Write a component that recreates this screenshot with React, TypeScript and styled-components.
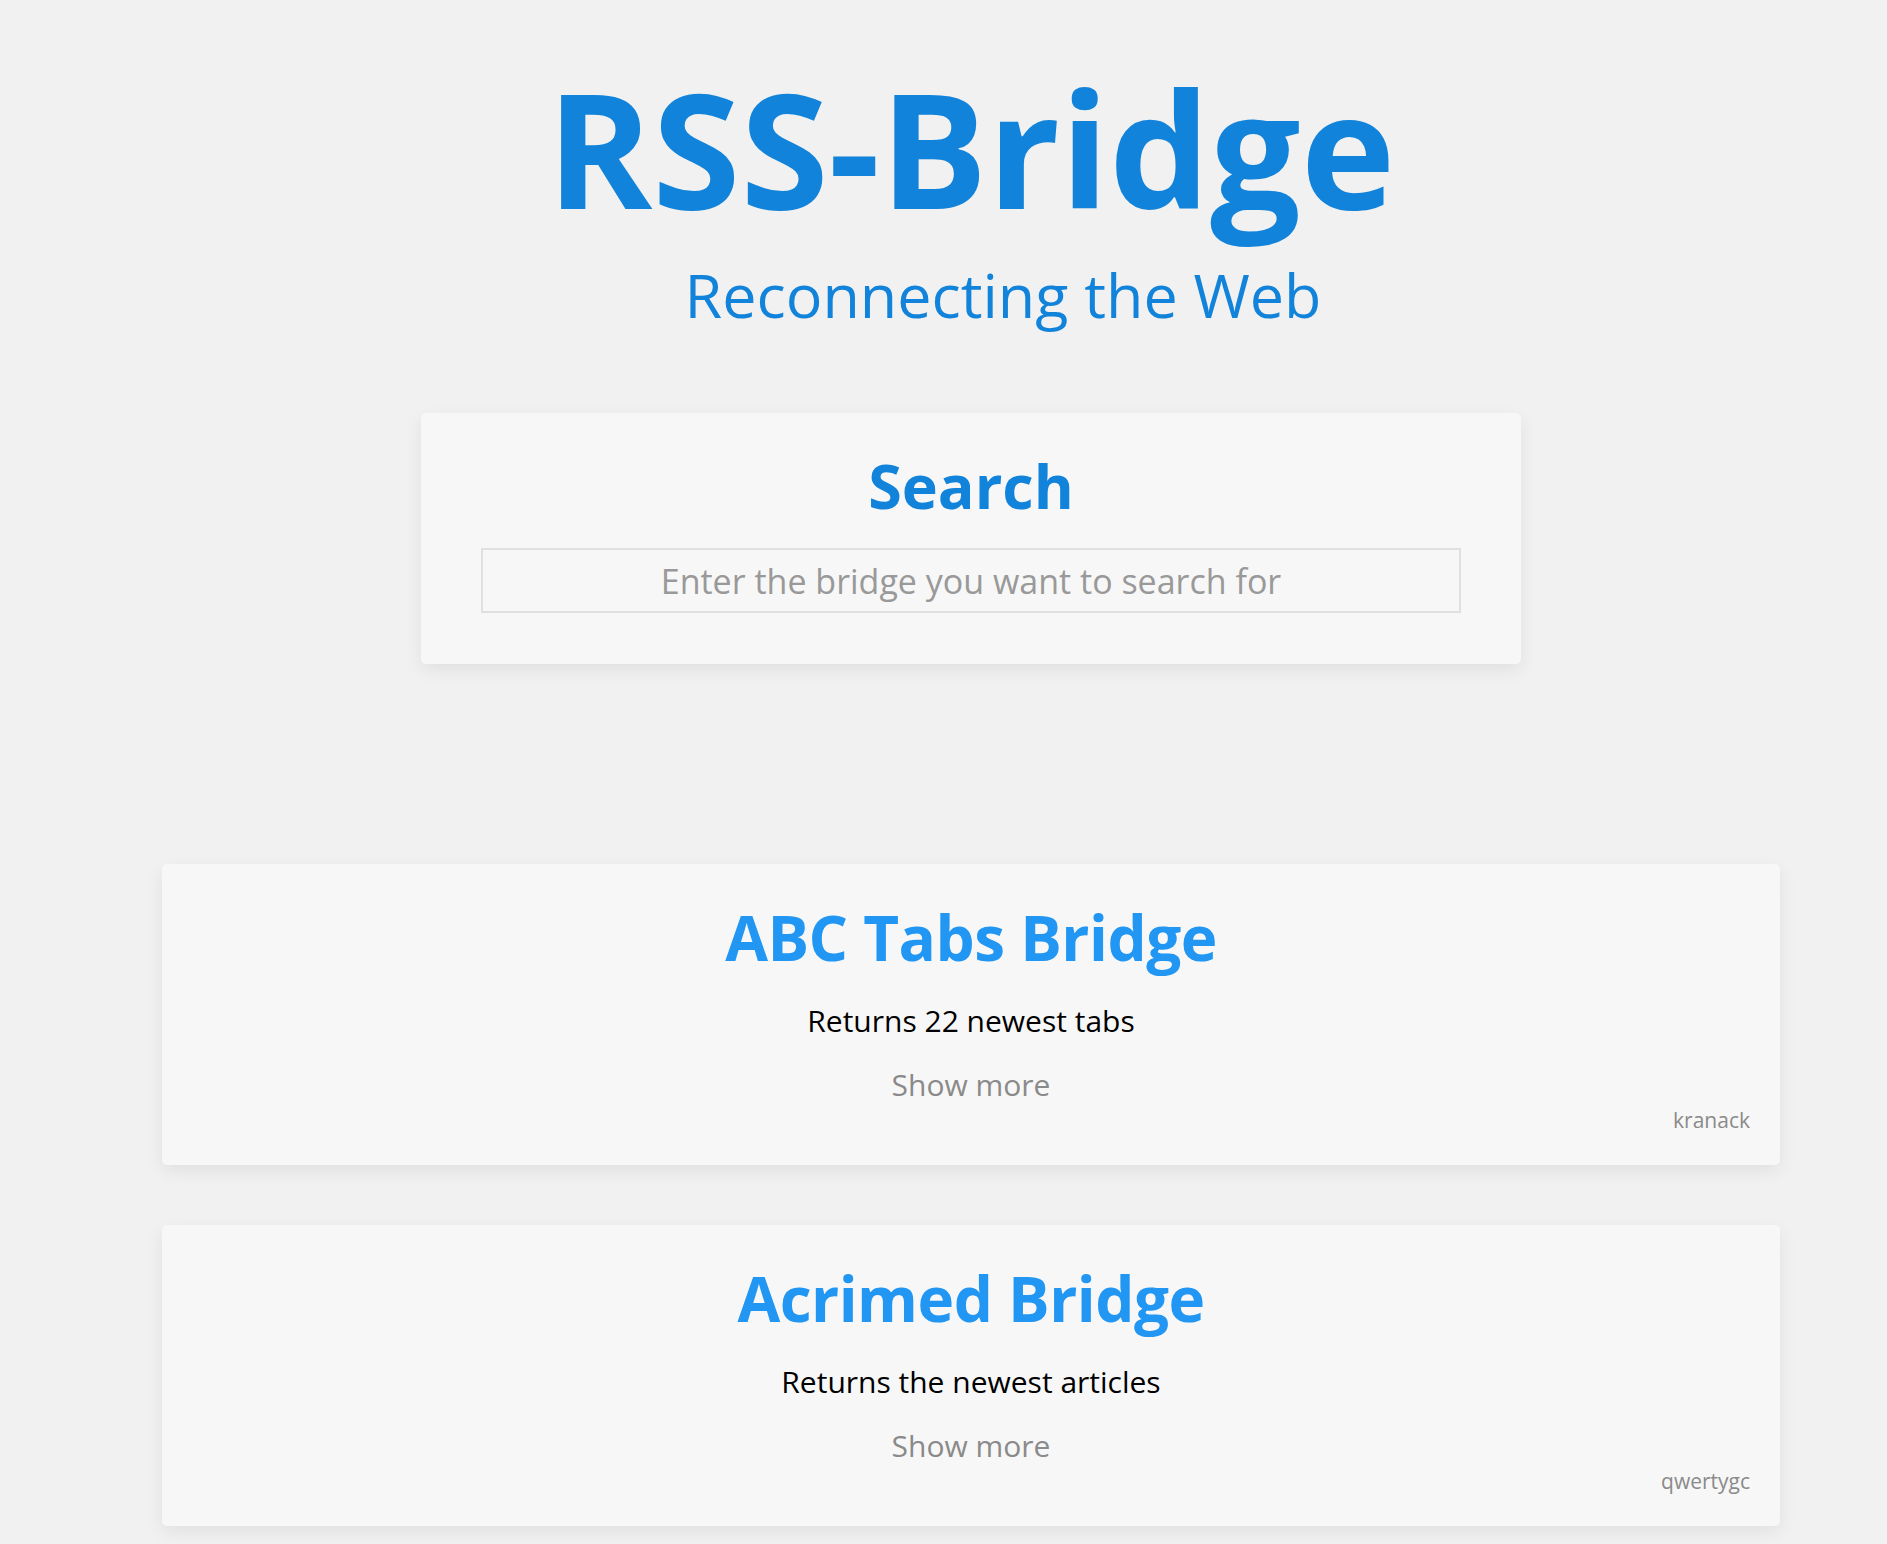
import React from 'react';
import styled, { createGlobalStyle } from 'styled-components';

const GlobalStyle = createGlobalStyle`
  html, body {
    margin: 0;
    padding: 0;
    background: #f1f1f1;
    font-family: 'Open Sans', 'Noto Sans', Arial, sans-serif;
  }
`;

const Page = styled.div`
  padding: 0 107px 40px 162px;
  display: flex;
  flex-direction: column;
  align-items: stretch;
`;

const Header = styled.header`
  display: flex;
  flex-direction: column;
  align-items: center;
  padding-top: 67px;
`;

const Title = styled.h1`
  margin: 0;
  font-size: 160px;
  line-height: 1;
  font-weight: 700;
  color: #1283da;
`;

const Subtitle = styled.h2`
  margin: 37px 0 0;
  padding-left: 64px;
  font-size: 61px;
  line-height: 1;
  font-weight: 400;
  color: #1283da;
`;

const SearchCard = styled.section`
  align-self: center;
  box-sizing: border-box;
  width: 1100px;
  margin-top: 88px;
  padding: 42px 60px 51px;
  background: #f7f7f7;
  border-radius: 5px;
  box-shadow: 0 6px 18px rgba(0, 0, 0, 0.07);
  display: flex;
  flex-direction: column;
  align-items: center;
`;

const SearchHeading = styled.h2`
  margin: 0;
  font-size: 61px;
  line-height: 1;
  font-weight: 700;
  color: #1283da;
`;

const SearchInput = styled.input`
  box-sizing: border-box;
  width: 100%;
  height: 65px;
  margin-top: 32px;
  border: 2px solid #e0e0e0;
  background: #f7f7f7;
  font-family: inherit;
  font-size: 34px;
  text-align: center;
  color: #333;
  outline: none;

  &::placeholder {
    color: #999;
  }
`;

const BridgeList = styled.div`
  margin-top: 200px;
  display: flex;
  flex-direction: column;
  gap: 60px;
`;

const BridgeCard = styled.section`
  box-sizing: border-box;
  height: 301px;
  padding: 42px 30px 0;
  background: #f7f7f7;
  border-radius: 5px;
  box-shadow: 0 6px 18px rgba(0, 0, 0, 0.07);
  display: flex;
  flex-direction: column;
  align-items: center;
`;

const BridgeTitle = styled.h2`
  margin: 0;
  font-size: 62px;
  line-height: 1;
  font-weight: 700;
  letter-spacing: -0.5px;
  color: #2196f3;
`;

const Description = styled.p`
  margin: 38px 0 0;
  font-size: 30px;
  line-height: 1;
  color: #000;
`;

const ShowMore = styled.span`
  margin-top: 34px;
  font-size: 30px;
  line-height: 1;
  color: #8a8a8a;
  cursor: pointer;
`;

const Maintainer = styled.span`
  align-self: flex-end;
  margin-top: 10px;
  font-size: 21px;
  line-height: 1;
  color: #8a8a8a;
`;

interface Bridge {
  name: string;
  description: string;
  maintainer: string;
}

const bridges: Bridge[] = [
  { name: 'ABC Tabs Bridge', description: 'Returns 22 newest tabs', maintainer: 'kranack' },
  { name: 'Acrimed Bridge', description: 'Returns the newest articles', maintainer: 'qwertygc' },
];

function BridgeItem ({ bridge }: { bridge: Bridge }): React.ReactElement {
  return (
    <BridgeCard>
      <BridgeTitle>{bridge.name}</BridgeTitle>
      <Description>{bridge.description}</Description>
      <ShowMore>Show more</ShowMore>
      <Maintainer>{bridge.maintainer}</Maintainer>
    </BridgeCard>
  );
}

export default function App (): React.ReactElement {
  return (
    <>
      <GlobalStyle />
      <Page>
        <Header>
          <Title>RSS-Bridge</Title>
          <Subtitle>Reconnecting the Web</Subtitle>
        </Header>
        <SearchCard>
          <SearchHeading>Search</SearchHeading>
          <SearchInput placeholder='Enter the bridge you want to search for' />
        </SearchCard>
        <BridgeList>
          {bridges.map((b) => <BridgeItem bridge={b} key={b.name} />)}
        </BridgeList>
      </Page>
    </>
  );
}
